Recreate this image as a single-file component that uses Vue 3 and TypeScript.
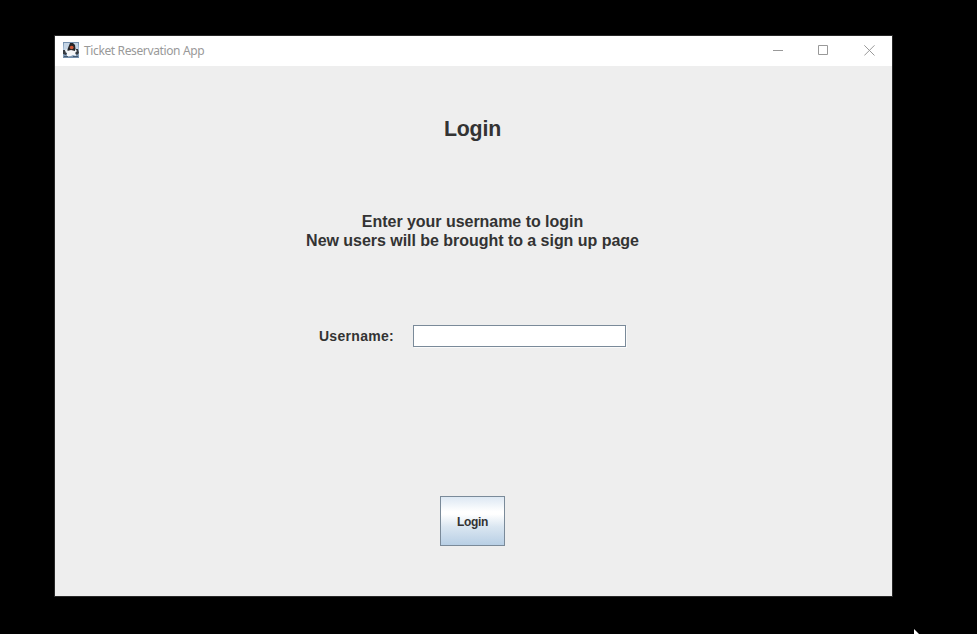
<script setup lang="ts">
import { ref } from 'vue'

const username = ref<string>('')
const instructions: string[] = [
  'Enter your username to login',
  'New users will be brought to a sign up page',
]
</script>

<template>
  <div class="desktop">
    <main class="window">
      <header class="titlebar">
        <svg class="app-icon" width="16" height="16" viewBox="0 0 16 16">
          <defs>
            <linearGradient id="tile" x1="0" y1="0" x2="0" y2="1">
              <stop offset="0" stop-color="#718dab" />
              <stop offset=".5" stop-color="#b3c9df" />
              <stop offset="1" stop-color="#6f8aa8" />
            </linearGradient>
          </defs>
          <rect width="16" height="16" fill="url(#tile)" />
          <path d="M1 1h14v7H1z" fill="#c5d5e5" />
          <path d="M7 1h3l2 2 .5 4 .5 2H4l1-3z" fill="#252629" />
          <path d="M4 9l4-1 4 1 1 5-3-1-2 1-4 .5z" fill="#f5f6f8" />
          <path d="M0 8h2l2 3-1 2-3-1zM13 7h2l1 4-2 2-2-2z" fill="#353a40" />
          <path d="M2 8l2-1 1 3-2 1zM12 7l2 2-2 2z" fill="#eef2f5" />
          <ellipse cx="8.7" cy="5.5" rx="1.9" ry="1.8" fill="#d35a38" />
          <path d="M1 14h4v1H1zM10 14h5v1h-5z" fill="#465a70" />
        </svg>
        <span class="app-title">Ticket Reservation App</span>
        <div class="controls">
          <svg width="11" height="11" viewBox="0 0 11 11"><path d="M0 5.5h10" /></svg>
          <svg width="11" height="11" viewBox="0 0 11 11"><path d="M.5.5h9v9h-9z" /></svg>
          <svg width="11" height="11" viewBox="0 0 11 11"><path d="M.3.3l10.2 10.2M10.5.3L.3 10.5" /></svg>
        </div>
      </header>
      <form class="content" @submit.prevent>
        <h1>Login</h1>
        <div class="instructions">
          <p v-for="line in instructions" :key="line">{{ line }}</p>
        </div>
        <div class="field">
          <label for="username">Username:</label>
          <input id="username" v-model="username" type="text" autocomplete="off" />
        </div>
        <button type="submit">Login</button>
      </form>
    </main>
    <svg class="cursor" width="6" height="6" viewBox="0 0 6 6"><path d="M0 0l6 6H0z" fill="#fff" /></svg>
  </div>
</template>

<style>
body {
  background: #000;
  overflow: hidden;
}
</style>

<style scoped>
.desktop {
  position: relative;
  box-sizing: border-box;
  width: 977px;
  height: 634px;
  padding: 35px 0 0 54px;
  background: #000;
  color: #333;
  font-family: "Liberation Sans", Arial, sans-serif;
}
.window {
  box-sizing: border-box;
  width: 839px;
  height: 562px;
  border: 1px solid #272727;
  background: #eee;
}
.titlebar {
  display: flex;
  align-items: center;
  box-sizing: border-box;
  height: 30px;
  padding: 0 17px 2px 8px;
  background: #fff;
}
.app-title {
  margin: 2px 0 0 5px;
  color: #999;
  font: 12px/16px "Noto Sans", sans-serif;
  letter-spacing: -0.37px;
  white-space: nowrap;
}
.controls {
  display: flex;
  gap: 34px;
  margin-left: auto;
}
.controls svg {
  fill: none;
  stroke: #999;
}
.controls svg:nth-child(2) {
  margin-right: 1px;
}
.content {
  display: flex;
  flex-direction: column;
  align-items: center;
  width: 835px;
  padding-top: 51px;
}
h1 {
  margin: 0;
  font-size: 21.33px;
  line-height: 24px;
  letter-spacing: -0.2px;
}
.instructions {
  margin-top: 71px;
  text-align: center;
  font-size: 16px;
  font-weight: bold;
  line-height: 19px;
  letter-spacing: -0.035px;
}
p {
  margin: 0;
}
.field {
  display: flex;
  align-items: center;
  gap: 19px;
  height: 22px;
  margin-top: 75px;
}
label {
  font-size: 14px;
  line-height: 16px;
  font-weight: bold;
  letter-spacing: 0.3px;
}
input {
  box-sizing: border-box;
  width: 213px;
  height: 22px;
  padding: 2px;
  border: 1px solid #7a8a99;
  border-radius: 0;
  outline: none;
  background: #fff;
  box-shadow: 1px 1px #fafafa;
  font: 14px "Liberation Sans", sans-serif;
}
button {
  width: 65px;
  height: 50px;
  margin-top: 149px;
  padding: 1px 0 0;
  border: 1px solid #7a8a99;
  border-radius: 0;
  background: linear-gradient(#dde8f3 0%, #fff 30%, #fff 36%, #dae6f1 62%, #b8cfe5 100%);
  color: #333;
  font: bold 12px/14px "Liberation Sans", sans-serif;
  letter-spacing: -0.3px;
}
.cursor {
  position: absolute;
  left: 914px;
  top: 629px;
}
</style>
